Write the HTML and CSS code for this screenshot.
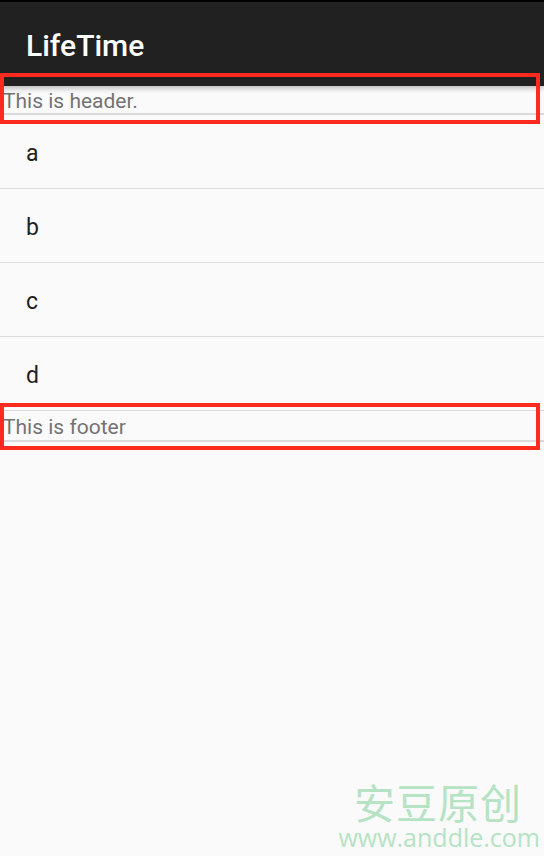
FILE: index.html
```html
<!DOCTYPE html>
<html>
<head>
<meta charset="utf-8">
<link rel="stylesheet" href="styles.css">
</head>
<body>
<div class="screen">
  <div class="statusbar"></div>
  <header class="toolbar"><span class="title">LifeTime</span></header>
  <div class="list">
    <div class="hf header">This is header.</div>
    <div class="item">a</div>
    <div class="item">b</div>
    <div class="item">c</div>
    <div class="item last">d</div>
    <div class="hf footer">This is footer</div>
  </div>
  <div class="mark mark-header"></div>
  <div class="mark mark-footer"></div>
  <div class="watermark">
    <div class="wm-cn">安豆原创</div>
    <div class="wm-url">www.anddle.com</div>
  </div>
</div>
</body>
</html>
```
FILE: styles.css
```css
html, body {
  margin: 0;
  padding: 0;
  background: #fafafa;
}
.screen {
  position: relative;
  width: 544px;
  height: 856px;
  overflow: hidden;
  background: #fafafa;
  font-family: Roboto, "Noto Sans", sans-serif;
}
.statusbar {
  height: 2px;
  background: #000;
}
.toolbar {
  position: relative;
  z-index: 2;
  height: 84px;
  background: #212121;
  display: flex;
  align-items: center;
  padding-left: 26px;
  box-shadow: 0 2px 6px rgba(0,0,0,0.28);
}
.title {
  color: #fff;
  font-size: 30px;
  font-weight: 500;
  margin-top: 2px;
}
.list {
  display: flex;
  flex-direction: column;
}
.hf {
  font-size: 21px;
  color: #737373;
  padding-left: 3px;
  display: flex;
  align-items: center;
  box-sizing: border-box;
  border-bottom: 2px solid #d9d9d9;
}
.header {
  height: 29px;
  padding-top: 2px;
}
.footer {
  height: 32px;
  padding-top: 2px;
  border-top: 1px solid #d9d9d9;
}
.item {
  height: 74px;
  display: flex;
  align-items: center;
  padding-left: 26px;
  padding-top: 4px;
  box-sizing: border-box;
  font-size: 23px;
  color: #212121;
  border-bottom: 1px solid #dcdcdc;
}
.item.last {
  border-bottom: none;
  height: 73px;
}
.mark {
  position: absolute;
  z-index: 3;
  left: 0;
  border: 4px solid #ff2a1f;
  box-sizing: border-box;
}
.mark-header {
  top: 73px;
  width: 540px;
  height: 51px;
}
.mark-footer {
  top: 403px;
  width: 540px;
  height: 47px;
}
.watermark {
  position: absolute;
  right: 4px;
  bottom: 6px;
  display: flex;
  flex-direction: column;
  align-items: flex-end;
  color: #b5e3c4;
}
.wm-cn {
  font-family: "Noto Sans CJK SC", sans-serif;
  font-size: 41px;
  letter-spacing: 1px;
  line-height: 40px;
  margin-right: 18px;
  margin-bottom: 3px;
}
.wm-url {
  font-family: "Open Sans", sans-serif;
  font-size: 25px;
  line-height: 26px;
}
```
